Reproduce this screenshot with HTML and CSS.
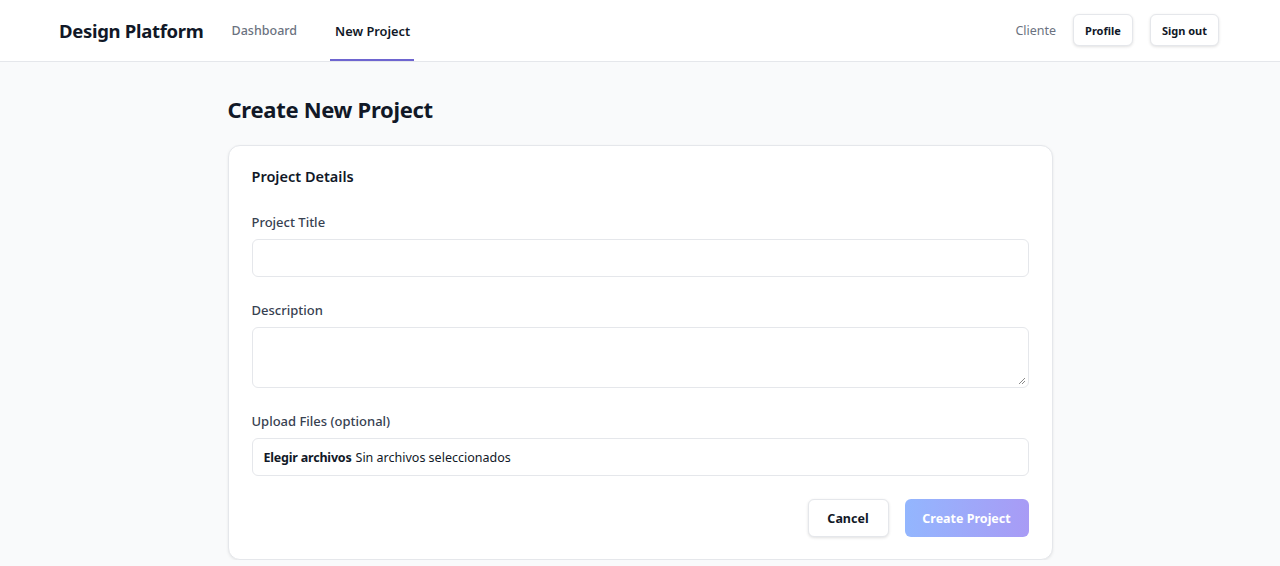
FILE: index.html
```html
<!DOCTYPE html>
<html>
<head>
<meta charset="utf-8">
<link rel="stylesheet" href="styles.css">
</head>
<body>
<header class="topbar">
  <div class="left">
    <div class="brand">Design Platform</div>
    <nav class="nav">
      <a class="nav-link">Dashboard</a>
      <a class="nav-link active">New Project</a>
    </nav>
  </div>
  <div class="right">
    <span class="role">Cliente</span>
    <button class="btn-small">Profile</button>
    <button class="btn-small">Sign out</button>
  </div>
</header>
<main class="main">
  <h1 class="title">Create New Project</h1>
  <section class="card">
    <h2 class="card-title">Project Details</h2>
    <div class="field">
      <label class="label">Project Title</label>
      <div class="input"></div>
    </div>
    <div class="field">
      <label class="label">Description</label>
      <div class="textarea">
        <svg class="grip" width="8" height="8" viewBox="0 0 8 8"><path d="M7 1 L1 7 M7 4 L4 7" stroke="#8a8a8a" stroke-width="1"/></svg>
      </div>
    </div>
    <div class="field field-last">
      <label class="label">Upload Files (optional)</label>
      <div class="file"><b class="file-btn">Elegir archivos</b> Sin archivos seleccionados</div>
    </div>
    <div class="actions">
      <button class="btn-cancel">Cancel</button>
      <button class="btn-primary">Create Project</button>
    </div>
  </section>
</main>
</body>
</html>
```
FILE: styles.css
```css
* { box-sizing: border-box; }
body {
  margin: 0;
  background: #f9fafb;
  font-family: "Noto Sans", "Open Sans", sans-serif;
  color: #111827;
}
.topbar {
  height: 62px;
  background: #fff;
  border-bottom: 1px solid #e5e7eb;
  display: flex;
  justify-content: space-between;
  align-items: stretch;
  padding: 0 61px 0 59px;
}
.left { display: flex; align-items: stretch; }
.brand {
  font-size: 18.5px;
  font-weight: 700;
  display: flex;
  align-items: center;
  letter-spacing: -0.3px;
  margin-right: 24px;
}
.nav { display: flex; align-items: stretch; gap: 29px; }
.nav-link {
  display: flex;
  align-items: center;
  font-size: 12.5px;
  font-weight: 500;
  color: #6b7280;
  padding: 2px 4px 0;
  border-bottom: 2px solid transparent;
}
.nav-link.active {
  color: #111827;
  border-bottom-color: #6e65d0;
  font-weight: 600;
  font-size: 12.8px;
  padding: 2px 4px 0 5px;
}
.right { display: flex; align-items: center; gap: 17px; }
.role { font-size: 12.5px; color: #6b7280; }
.btn-small {
  font-family: inherit;
  height: 32px;
  padding: 0 11px;
  font-size: 11px;
  font-weight: 700;
  color: #111827;
  background: #fff;
  border: 1px solid #e5e7eb;
  border-radius: 6px;
  box-shadow: 0 1px 3px rgba(0,0,0,0.12);
  margin-top: -1px;
}
.main {
  width: 825px;
  margin: 0 auto;
  padding-top: 32px;
}
.title {
  margin: 0 0 21px;
  font-size: 22px;
  font-weight: 700;
  line-height: 30px;
  letter-spacing: -0.3px;
}
.card {
  background: #fff;
  border: 1px solid #e5e7eb;
  border-radius: 12px;
  box-shadow: 0 1px 3px rgba(0,0,0,0.08);
  padding: 19px 23px 22px;
}
.card-title {
  margin: 0 0 26px;
  font-size: 14.5px;
  font-weight: 600;
  line-height: 22px;
}
.field { margin-bottom: 24px; }
.field-last { margin-bottom: 23px; }
.label {
  display: block;
  font-size: 13px;
  font-weight: 500;
  color: #374151;
  line-height: 18px;
  margin-bottom: 8px;
}
.input, .textarea, .file {
  border: 1px solid #e5e7eb;
  border-radius: 6px;
  background: #fff;
}
.input { height: 38px; }
.textarea { height: 61px; position: relative; }
.grip { position: absolute; right: 2px; bottom: 2px; }
.file {
  height: 38px;
  display: flex;
  align-items: center;
  padding: 0 11px;
  font-size: 12.5px;
  color: #111827;
  gap: 4px;
}
.file-btn { font-weight: 700; letter-spacing: -0.2px; }
.actions {
  display: flex;
  justify-content: flex-end;
  gap: 16px;
}
.btn-cancel, .btn-primary {
  font-family: inherit;
  height: 38px;
  border-radius: 6px;
  font-size: 12.5px;
  font-weight: 700;
}
.btn-cancel {
  width: 81px;
  background: #fff;
  color: #111827;
  border: 1px solid #e5e7eb;
  box-shadow: 0 1px 3px rgba(0,0,0,0.12);
}
.btn-primary {
  width: 124px;
  border: none;
  color: #fff;
  background: linear-gradient(90deg, #93b6fe, #a89bf5);
}
```
